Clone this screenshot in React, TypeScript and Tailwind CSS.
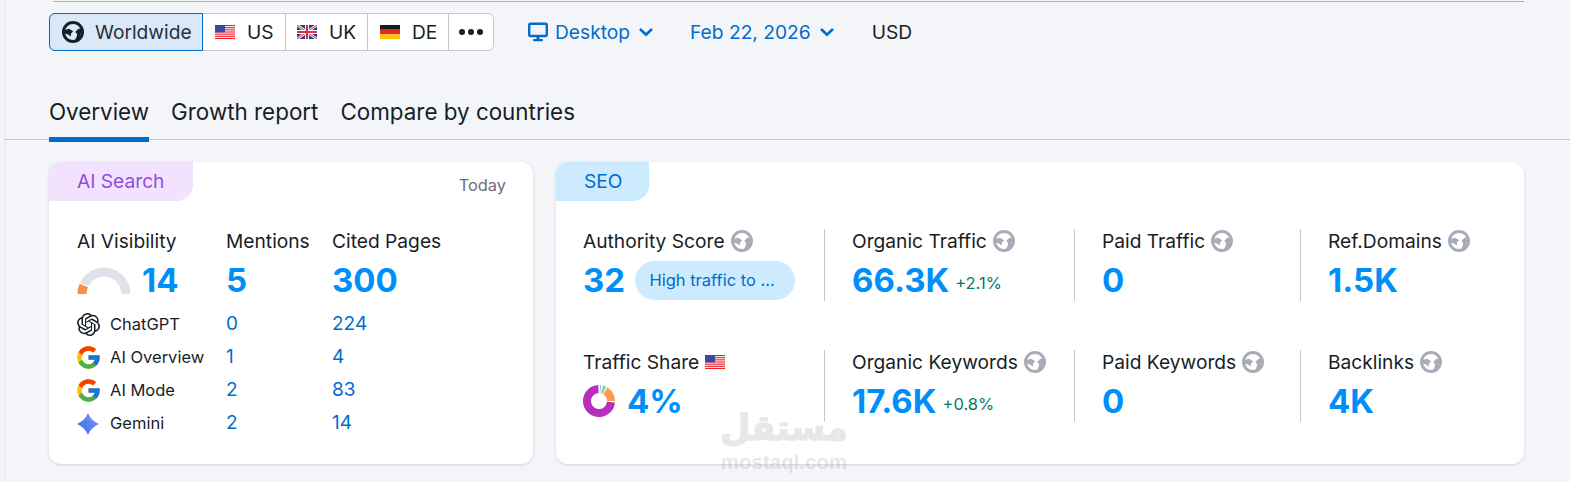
import React from 'react'
import { SiOpenai } from 'react-icons/si'
import { FcGoogle } from 'react-icons/fc'

const Globe: React.FC<{ color: string }> = ({ color }) => (
  <svg width="22" height="22" viewBox="0 0 22 22" className="shrink-0">
    <circle cx="11" cy="11" r="9.5" fill="none" stroke={color} strokeWidth="3" />
    <path d="M2.5 9 L7 7.8 L11.2 10.2 L9 12.4 L8.8 15.5 L6 13.6 L3 12.5 Z" fill={color} />
    <path d="M20 7.5 L16.5 7.8 L13.2 11 L15.2 13 L14.6 16 L12.5 20 L17.5 18 Z" fill={color} />
  </svg>
)

const UsFlag = () => (
  <svg width="20" height="14" viewBox="0 0 20 14" className="shrink-0">
    <rect width="20" height="14" fill="#fff" />
    {[0, 2.15, 4.3, 6.45, 8.6, 10.75, 12.9].map((y) => (
      <rect key={y} y={y} width="20" height="1.1" fill="#ef1c25" />
    ))}
    <rect width="10" height="7.4" fill="#3c4a9c" />
  </svg>
)

const UkFlag = () => (
  <svg width="20" height="14" viewBox="0 0 20 14" className="shrink-0">
    <rect width="20" height="14" fill="#27408f" />
    <path d="M0 0 L20 14 M20 0 L0 14" stroke="#fff" strokeWidth="2.6" />
    <path d="M0 0 L20 14 M20 0 L0 14" stroke="#d8303f" strokeWidth="1" />
    <path d="M10 0 V14 M0 7 H20" stroke="#fff" strokeWidth="4" />
    <path d="M10 0 V14 M0 7 H20" stroke="#d8303f" strokeWidth="2.2" />
  </svg>
)

const DeFlag = () => (
  <svg width="20" height="14" viewBox="0 0 20 14" className="shrink-0">
    <rect width="20" height="4.7" fill="#1b1b1f" />
    <rect y="4.7" width="20" height="4.7" fill="#dd2c1e" />
    <rect y="9.4" width="20" height="4.6" fill="#fdc400" />
  </svg>
)

const Chevron = () => (
  <svg width="16" height="16" viewBox="0 0 16 16" className="shrink-0">
    <path d="M2 5 L8 10.8 L14 5" fill="none" stroke="#006dca" strokeWidth="2.6" />
  </svg>
)

const Monitor = () => (
  <svg width="20" height="20" viewBox="0 0 20 20" className="shrink-0">
    <rect x="1.2" y="1.8" width="17.6" height="12.2" rx="1.6" fill="none" stroke="#006dca" strokeWidth="2.4" />
    <rect x="8.5" y="14" width="3" height="3" fill="#006dca" />
    <rect x="5" y="17" width="10" height="2.2" rx="1" fill="#006dca" />
  </svg>
)

const Gemini = () => (
  <svg width="24" height="24" viewBox="0 0 24 24" className="shrink-0">
    <defs>
      <linearGradient id="gem" x1="0" y1="1" x2="1" y2="0">
        <stop offset="0.2" stopColor="#3b7cf2" />
        <stop offset="0.55" stopColor="#5b83ee" />
        <stop offset="0.9" stopColor="#a58be8" />
      </linearGradient>
    </defs>
    <path d="M12 1 C14.5 6.5 17.5 9.5 23 12 C17.5 14.5 14.5 17.5 12 23 C9.5 17.5 6.5 14.5 1 12 C6.5 9.5 9.5 6.5 12 1 Z" fill="url(#gem)" />
  </svg>
)

const Gauge = () => (
  <svg width="54" height="27" viewBox="0 0 54 27" className="shrink-0">
    <path d="M5 27 A22 22 0 0 1 49 27" fill="none" stroke="#e0e1e9" strokeWidth="9" />
    <path d="M5 27 A22 22 0 0 1 7 18" fill="none" stroke="#ff8c43" strokeWidth="9" />
    <path d="M1 15.5 L13 20.5" stroke="#fff" strokeWidth="1.2" />
  </svg>
)

const Donut = () => (
  <svg width="32" height="32" viewBox="0 0 32 32" className="shrink-0">
    <circle cx="16" cy="16" r="12" fill="none" stroke="#b52ebd" strokeWidth="8" strokeDasharray="54.5 75.4" transform="rotate(5 16 16)" />
    <circle cx="16" cy="16" r="12" fill="none" stroke="#ff9a4d" strokeWidth="8" strokeDasharray="12 75.4" transform="rotate(-58 16 16)" />
    <circle cx="16" cy="16" r="12" fill="none" stroke="#7dd3ae" strokeWidth="8" strokeDasharray="2.5 75.4" transform="rotate(-75 16 16)" />
    <circle cx="16" cy="16" r="12" fill="none" stroke="#8ec8f2" strokeWidth="8" strokeDasharray="1 75.4" transform="rotate(-86 16 16)" />
  </svg>
)

const Label: React.FC<{ text: string; icon?: React.ReactNode }> = ({ text, icon }) => (
  <div className="flex items-center gap-1.5 h-6 text-[19.2px] text-[#181e25] whitespace-nowrap">
    <span>{text}</span>
    {icon}
  </div>
)

const Big: React.FC<{ children: React.ReactNode }> = ({ children }) => (
  <span className="text-[33px] leading-[39px] font-bold text-[#008ff8]">{children}</span>
)

const Delta: React.FC<{ text: string }> = ({ text }) => (
  <span className="text-[16.5px] text-[#007c65] mt-1.5 -ml-px">{text}</span>
)

const Metric: React.FC<{ label: string; children: React.ReactNode; divider?: boolean; icon?: React.ReactNode }> = ({
  label,
  children,
  divider = true,
  icon,
}) => (
  <div className={`h-[72px] flex flex-col gap-[8px] ${divider ? 'border-l border-[#c4c7cf] pl-[27px]' : ''}`}>
    <Label text={label} icon={icon ?? <Globe color="#a9abb6" />} />
    <div className="flex items-center h-[38px] gap-[7px]">{children}</div>
  </div>
)

const engines = [
  { name: 'ChatGPT', icon: <SiOpenai className="w-[23px] h-[23px] text-[#181e25]" />, mentions: '0', pages: '224' },
  { name: 'AI Overview', icon: <FcGoogle className="w-[27px] h-[27px] shrink-0" />, mentions: '1', pages: '4' },
  { name: 'AI Mode', icon: <FcGoogle className="w-[27px] h-[27px] shrink-0" />, mentions: '2', pages: '83' },
  { name: 'Gemini', icon: <Gemini />, mentions: '2', pages: '14' },
]

export default function App() {
  return (
    <div className="relative h-[482px] w-[1570px] overflow-hidden bg-[#f4f5f9] font-['Inter',sans-serif] text-[#181e25]">
      {/* page edge */}
      <div className="h-full ml-1 border-l border-[#e6e7ed]">
        {/* notice bottom edge */}
        <div className="h-[2px] ml-[48px] mr-[46px] pt-px">
          <div className="h-px bg-[#ff9d45]" />
        </div>

        {/* filters */}
        <div className="flex items-center h-[38px] mt-[11px] ml-[44px]">
          <div className="flex h-[38px] rounded-md border border-[#c4c7cf] bg-white text-[19.2px]">
            <div className="flex items-center gap-[11px] w-[154px] -m-px pl-[12px] rounded-l-md border border-[#006dca] bg-[#d9e9f9]">
              <Globe color="#181e25" />
              <span className="text-[#2b3038]">Worldwide</span>
            </div>
            <div className="flex items-center gap-[12px] w-[83px] pl-[12px] border-r border-[#c4c7cf] ml-px">
              <UsFlag />
              <span>US</span>
            </div>
            <div className="flex items-center gap-[12px] w-[82px] pl-[11px] border-r border-[#c4c7cf]">
              <UkFlag />
              <span>UK</span>
            </div>
            <div className="flex items-center gap-[12px] w-[81px] pl-[12px] border-r border-[#c4c7cf]">
              <DeFlag />
              <span>DE</span>
            </div>
            <div className="flex items-center justify-center gap-[3px] w-[44px]">
              <span className="w-[6px] h-[6px] rounded-full bg-[#181e25]" />
              <span className="w-[6px] h-[6px] rounded-full bg-[#181e25]" />
              <span className="w-[6px] h-[6px] rounded-full bg-[#181e25]" />
            </div>
          </div>

          <div className="flex items-center gap-[8px] ml-[34px] text-[19.2px] text-[#006dca]">
            <Monitor />
            <span className="-ml-px">Desktop</span>
            <Chevron />
          </div>
          <div className="flex items-center gap-[8px] ml-[36px] text-[19.2px] text-[#006dca]">
            <span>Feb 22, 2026</span>
            <Chevron />
          </div>
          <span className="ml-[37px] text-[19.2px] text-[#181e25]">USD</span>
        </div>

        {/* tabs */}
        <div className="flex gap-[22px] h-[89px] pl-[44px] border-b border-[#c4c7cf]">
          <div className="flex flex-col justify-end h-[91px] border-b-[5px] border-[#006dca] pb-[11px] text-[22.4px] leading-[28px]">
            Overview
          </div>
          <div className="flex flex-col justify-end h-[91px] pb-[16px] text-[22.4px] leading-[28px]">Growth report</div>
          <div className="flex flex-col justify-end h-[91px] pb-[16px] text-[22.4px] leading-[28px]">Compare by countries</div>
        </div>

        {/* cards */}
        <div className="flex gap-[22px] mt-[22px] ml-[44px]">
          {/* AI Search */}
          <div className="w-[484px] h-[302px] rounded-xl bg-white shadow-[0_1px_3px_rgba(40,50,80,0.18)] overflow-hidden">
            <div className="flex justify-between">
              <div className="flex items-center w-[144px] h-[39px] pl-[28px] rounded-br-2xl bg-[#f3e2fe] text-[19.2px] text-[#8e4ee0]">
                AI Search
              </div>
              <span className="mt-[11px] mr-[27px] text-[16.4px] text-[#6c6e79]">Today</span>
            </div>
            <div className="grid grid-cols-[149px_106px_1fr] pl-[28px] pt-[28px]">
              <div className="flex flex-col gap-[8px]">
                <Label text="AI Visibility" />
                <div className="flex items-center gap-[11px] h-[38px]">
                  <Gauge />
                  <Big>14</Big>
                </div>
              </div>
              <div className="flex flex-col gap-[8px]">
                <Label text="Mentions" />
                <div className="flex items-center h-[38px]">
                  <Big>5</Big>
                </div>
              </div>
              <div className="flex flex-col gap-[8px]">
                <Label text="Cited Pages" />
                <div className="flex items-center h-[38px]">
                  <Big>300</Big>
                </div>
              </div>
            </div>
            <div className="flex flex-col pt-[9px] pl-[27px]">
              {engines.map((e) => (
                <div key={e.name} className="grid grid-cols-[150px_106px_1fr] items-center h-[33px] text-[19px]">
                  <div className="flex items-center gap-[10px] text-[16.5px] text-[#181e25]">
                    <span className="flex items-center justify-center w-[24px]">{e.icon}</span>
                    <span>{e.name}</span>
                  </div>
                  <span className="text-[#006dca]">{e.mentions}</span>
                  <span className="text-[#006dca]">{e.pages}</span>
                </div>
              ))}
            </div>
          </div>

          {/* SEO */}
          <div className="w-[968px] h-[302px] ml-px rounded-xl bg-white shadow-[0_1px_3px_rgba(40,50,80,0.18)] overflow-hidden">
            <div className="flex items-center w-[93px] h-[39px] pl-[28px] rounded-br-2xl bg-[#cdebff] text-[19.2px] text-[#006dca]">
              SEO
            </div>
            <div className="grid grid-cols-[241px_250px_226px_1fr] gap-y-[49px] pl-[27px] pt-[28px]">
              <Metric label="Authority Score" divider={false}>
                <Big>32</Big>
                <span className="flex items-center justify-center w-[160px] h-[39px] ml-[3px] pr-[6px] rounded-full bg-[#cdebff] text-[16.5px] text-[#006dca]">
                  High traffic to ...
                </span>
              </Metric>
              <Metric label="Organic Traffic">
                <Big>66.3K</Big>
                <Delta text="+2.1%" />
              </Metric>
              <Metric label="Paid Traffic">
                <Big>0</Big>
              </Metric>
              <Metric label="Ref.Domains">
                <Big>1.5K</Big>
              </Metric>
              <Metric label="Traffic Share" divider={false} icon={<UsFlag />}>
                <Donut />
                <span className="ml-[5px]">
                  <Big>4%</Big>
                </span>
              </Metric>
              <Metric label="Organic Keywords">
                <Big>17.6K</Big>
                <Delta text="+0.8%" />
              </Metric>
              <Metric label="Paid Keywords">
                <Big>0</Big>
              </Metric>
              <Metric label="Backlinks">
                <Big>4K</Big>
              </Metric>
            </div>
          </div>
        </div>
      </div>

      {/* watermark */}
      <div className="absolute left-[720px] top-[404px] w-[128px] flex flex-col items-center text-[#8d8d8d] opacity-20 blur-[0.5px] pointer-events-none">
        <span
          className="font-['DejaVu_Sans',sans-serif] font-bold text-[35px] leading-[48px] [-webkit-text-stroke:1.5px_#8d8d8d]"
          dir="rtl"
        >
          مستقل
        </span>
        <span className="font-['Liberation_Sans',sans-serif] font-bold text-[20.5px] leading-[20px]">mostaql.com</span>
      </div>
    </div>
  )
}
